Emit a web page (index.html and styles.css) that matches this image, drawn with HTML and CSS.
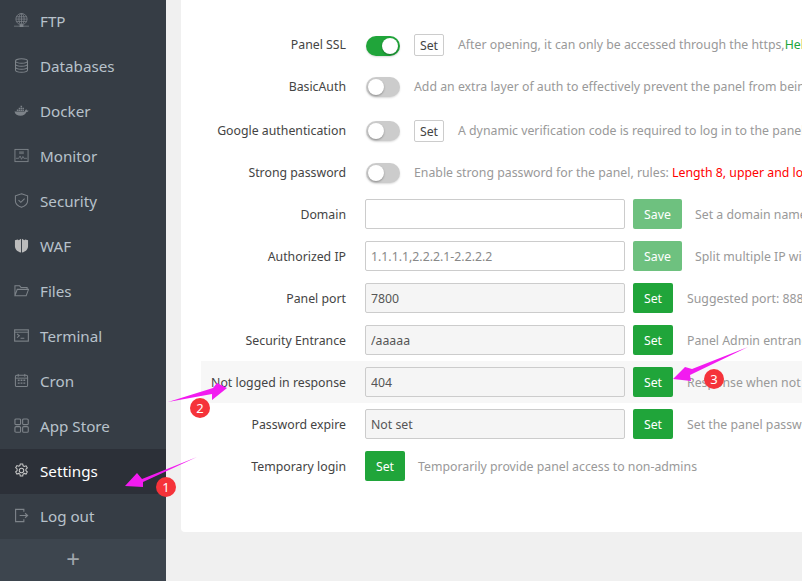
FILE: index.html
```html
<!DOCTYPE html>
<html lang="en">
<head>
<meta charset="utf-8">
<title>Panel settings</title>
<link rel="stylesheet" href="styles.css">
</head>
<body>
<div class="app">
  <aside class="sidebar">
    <nav class="menu">
      <a class="item"><svg class="ico" viewBox="0 0 16 16"><g fill="none" stroke="currentColor" stroke-width=".8"><circle cx="8" cy="6.500" r="6"/><ellipse cx="8" cy="6.500" rx="2.800" ry="6"/><path d="M2.500 4h11M2 6.500h12M2.500 9h11M8 .5v12"/></g><path d="M0 13.500h16v1H0zM6 12.500h4v2.500H6z" fill="currentColor"/></svg><span>FTP</span></a>
      <a class="item"><svg class="ico" viewBox="0 0 16 16"><g fill="none" stroke="currentColor" stroke-width="1.100"><ellipse cx="8" cy="3.200" rx="6.400" ry="2.400"/><path d="M1.600 3.200v9.600c0 1.300 2.900 2.400 6.400 2.400s6.400-1.100 6.400-2.400V3.200M1.600 6.400c0 1.300 2.900 2.400 6.400 2.400s6.400-1.100 6.400-2.400M1.600 9.600c0 1.300 2.900 2.400 6.400 2.400s6.400-1.100 6.400-2.400"/></g></svg><span>Databases</span></a>
      <a class="item"><svg class="ico" viewBox="0 0 16 16"><path fill="currentColor" d="M.5 9h11c.3-1.400 1-2 1.700-2.300.4.500.6 1 .6 1.400.5-.2 1.200-.2 1.700.1-.4 1-1.300 1.400-2.200 1.400-1 2.600-3.300 4-6.300 4-3.300 0-5.800-1.500-6.500-4.600z"/><path fill="currentColor" d="M3 7h1.600v1.500H3zM5 7h1.600v1.500H5zM7 7h1.600v1.500H7zM9 7h1.600v1.500H9zM5 5h1.600v1.500H5zM7 5h1.600v1.500H7zM9 5h1.600v1.500H9zM7 3h1.600v1.500H7z"/></svg><span>Docker</span></a>
      <a class="item"><svg class="ico" viewBox="0 0 16 16"><rect x="1" y="1.500" width="14" height="13" fill="none" stroke="currentColor"/><path d="M2 11h3l1.500-2.500L8 12l1.500-3 1 2H14" fill="none" stroke="currentColor" stroke-width=".8"/><path d="M5.500 3.500h5v3h-5z" fill="currentColor" opacity=".6"/></svg><span>Monitor</span></a>
      <a class="item"><svg class="ico" viewBox="0 0 16 16"><path d="M8 .8 14.500 3v5.500c0 3-2.600 5.300-6.500 6.800-3.900-1.500-6.500-3.800-6.500-6.800V3z" fill="none" stroke="currentColor" stroke-width="1.100"/><path d="M4.800 7.600 7.300 10l4-4" fill="none" stroke="currentColor" stroke-width="1.100"/></svg><span>Security</span></a>
      <a class="item"><svg class="ico ico-solid" viewBox="0 0 16 16"><path fill="currentColor" d="M1 2.500 4 1.500l1 .8L7.500.8V15.500C3.500 14.500 1 12 1 8.500zM8.500.8 11 2.300l1-.8 3 1v6c0 3.500-2.500 6-6.500 7z"/></svg><span>WAF</span></a>
      <a class="item"><svg class="ico" viewBox="0 0 16 16"><path d="M1 13.500V3h5l1.500 1.700H14v2M1 13.500 3.500 6.800H15.500L13 13.500z" fill="none" stroke="currentColor" stroke-width="1.100"/></svg><span>Files</span></a>
      <a class="item"><svg class="ico" viewBox="0 0 16 16"><rect x=".7" y="2" width="14.600" height="12" fill="none" stroke="currentColor" stroke-width="1.200"/><path d="M.7 4.500h14.600" stroke="currentColor"/><path d="m3.200 6.300 2.500 2-2.500 2M7 11h4" fill="none" stroke="currentColor" stroke-width="1.100"/></svg><span>Terminal</span></a>
      <a class="item"><svg class="ico" viewBox="0 0 16 16"><rect x="1.500" y="2.500" width="13" height="12" rx="1.500" fill="none" stroke="currentColor" stroke-width="1.100"/><path d="M4.500 1v3M11.500 1v3M1.500 5.500h13" stroke="currentColor"/><path fill="currentColor" d="M4 7h2v1.500H4zM7 7h2v1.500H7zM10 7h2v1.500h-2zM4 10h2v1.500H4zM7 10h2v1.500H7zM10 10h2v1.500h-2z"/></svg><span>Cron</span></a>
      <a class="item"><svg class="ico" viewBox="0 0 16 16"><g fill="none" stroke="currentColor" stroke-width="1.200"><rect x="1" y="1" width="6" height="6" rx="1.200"/><rect x="9.200" y="1" width="6" height="6" rx="1.200"/><rect x="1" y="9.200" width="6" height="6" rx="1.200"/><rect x="9.200" y="9.200" width="6" height="6" rx="1.200"/></g></svg><span>App Store</span></a>
      <a class="item active"><svg class="ico" viewBox="0 0 16 16"><g fill="none" stroke="currentColor" stroke-width="1.100"><path d="M6.700 1h2.600l.4 2 1.300.7 1.900-.7 1.300 2.300-1.500 1.300v1.600l1.500 1.300-1.300 2.300-1.900-.7-1.300.7-.4 2H6.700l-.4-2-1.300-.7-1.900.7-1.300-2.300 1.500-1.300V6.300L1.800 5l1.300-2.300 1.900.7 1.300-.7z"/><circle cx="8" cy="7.900" r="2.400"/></g></svg><span>Settings</span></a>
      <a class="item"><svg class="ico" viewBox="0 0 16 16"><path d="M10.500 4V1.500H1.700v13h8.800V12" fill="none" stroke="currentColor" stroke-width="1.200"/><path d="M6 8h8M11.800 5.600 14.500 8l-2.700 2.400" fill="none" stroke="currentColor" stroke-width="1.200"/></svg><span>Log out</span></a>
    </nav>
    <div class="add">+</div>
  </aside>
  <main class="main">
    <section class="card">
      <div class="row">
        <label class="label">Panel SSL</label>
        <span class="switch switch-set"></span>
        <button class="btn-mini">Set</button>
        <span class="hint hint-mini">After opening, it can only be accessed through the https,<a class="help">Help</a></span>
      </div>
      <div class="row">
        <label class="label">BasicAuth</label>
        <span class="switch"></span>
        <span class="hint">Add an extra layer of auth to effectively prevent the panel from being scanned</span>
      </div>
      <div class="row row-spaced">
        <label class="label">Google authentication</label>
        <span class="switch"></span>
        <button class="btn-mini">Set</button>
        <span class="hint hint-mini">A dynamic verification code is required to log in to the panel</span>
      </div>
      <div class="row">
        <label class="label">Strong password</label>
        <span class="switch"></span>
        <span class="hint">Enable strong password for the panel, rules: <b class="warn">Length 8, upper and lower case, numbers</b></span>
      </div>
      <div class="row">
        <label class="label">Domain</label>
        <input class="field" value="">
        <button class="btn btn-faded">Save</button>
        <span class="hint">Set a domain name for the panel access</span>
      </div>
      <div class="row">
        <label class="label">Authorized IP</label>
        <input class="field" placeholder="1.1.1.1,2.2.2.1-2.2.2.2">
        <button class="btn btn-faded">Save</button>
        <span class="hint">Split multiple IP with commas, only these IPs can access</span>
      </div>
      <div class="row">
        <label class="label">Panel port</label>
        <input class="field locked" value="7800" readonly>
        <button class="btn">Set</button>
        <span class="hint">Suggested port: 8888 - 65535, remember to open it</span>
      </div>
      <div class="row">
        <label class="label">Security Entrance</label>
        <input class="field locked" value="/aaaaa" readonly>
        <button class="btn">Set</button>
        <span class="hint">Panel Admin entrance, only accessible with this path</span>
      </div>
      <div class="row row-hover">
        <label class="label">Not logged in response</label>
        <input class="field locked" value="404" readonly>
        <button class="btn">Set</button>
        <span class="hint">Response when not logged in to the panel entrance</span>
      </div>
      <div class="row">
        <label class="label">Password expire</label>
        <input class="field locked" value="Not set" readonly>
        <button class="btn">Set</button>
        <span class="hint">Set the panel password expiration time for the account</span>
      </div>
      <div class="row">
        <label class="label">Temporary login</label>
        <button class="btn btn-first">Set</button>
        <span class="hint">Temporarily provide panel access to non-admins</span>
      </div>
    </section>
  </main>
</div>
<svg class="marks" viewBox="0 0 802 581">
  <polygon points="197,457 142,479 137,473 125,486 143,487 143,482"/>
  <polygon points="168,402 213,388 217,383 227,388 212,400 212,394"/>
  <polygon points="748,347 692,369 685,367 673,379 691,381 690,375"/>
</svg>
<span class="badge badge-1">1</span>
<span class="badge badge-2">2</span>
<span class="badge badge-3">3</span>
</body>
</html>
```
FILE: styles.css
```css
* { box-sizing: border-box; }
html, body { margin: 0; height: 100%; overflow: hidden; }
body { font-family: "Noto Sans", "Liberation Sans", sans-serif; font-size: 12.3px; color: #333; background: #f0f0f0; }
.app { display: flex; height: 581px; width: 802px; overflow: hidden; }
.sidebar { width: 166px; flex: none; display: flex; flex-direction: column; background: #363d45; overflow: hidden; }
.menu { flex: 1; margin-top: -1px; }
.item { display: flex; align-items: center; height: 45px; padding-left: 14px; color: #b8c2cb; font-size: 15.2px; }
.item span { margin-left: 11px; margin-bottom: 2px; }
.item.active { background: #2c3038; color: #fff; }
.ico { width: 15px; height: 15px; flex: none; margin-bottom: 2px; color: #7d8389; }
.ico-solid { color: #bcbcbc; }
.active .ico { color: #c8c8c8; }
.add { height: 43px; flex: none; padding-right: 20px; background: #3d454e; color: #a0a6ac; font-size: 24px; line-height: 40px; text-align: center; }
.main { flex: 1; min-width: 0; padding-left: 15px; overflow: hidden; }
.card { width: 800px; padding: 23px 0 45px 20px; background: #fff; border-radius: 0 0 4px 4px; }
.row { display: flex; align-items: center; height: 42px; white-space: nowrap; }
.row-spaced { margin-top: 2px; }
.row-hover { background: #f7f7f7; }
.label { width: 145px; flex: none; margin-right: 19px; text-align: right; color: #444; }
.switch { position: relative; flex: none; width: 34px; height: 20px; margin: 2px 14px 0 1px; border-radius: 10px; background: #ccc; box-shadow: 0 1px 2px rgba(0,0,0,.15); }
.switch::after { content: ""; position: absolute; left: 2px; top: 2px; width: 16px; height: 16px; border-radius: 50%; background: #fff; box-shadow: 0 1px 2px rgba(0,0,0,.3); }
.switch-set { margin-top: 4px; background: #20a53a; }
.switch-set::after { left: 16px; }
.btn-mini { flex: none; width: 30px; height: 22px; padding: 0; margin: 2px 14px 0 0; border: 1px solid #ccc; border-radius: 2px; background: #fff; color: #444; font: inherit; }
.hint { color: #999; }
.help { color: #20a53a; }
.warn { font-weight: normal; color: #f00; }
.field { flex: none; width: 260px; height: 30px; padding: 0 5px; margin-right: 8px; border: 1px solid #ccc; border-radius: 2px; background: #fff; color: #555; font: inherit; }
.field::placeholder { color: #888; opacity: 1; }
.field.locked { background: #f5f5f5; }
.btn { flex: none; height: 30px; min-width: 40px; padding: 0 10px; margin-right: 14px; border: 0; border-radius: 2px; background: #20a53a; color: #fff; font: inherit; }
.btn-faded { width: 49px; margin-right: 13px; background: #6ec17f; }
.btn-first { margin-right: 13px; }
.marks { position: absolute; left: 0; top: 0; width: 802px; height: 581px; pointer-events: none; }
.marks polygon { fill: #f21bf0; }
.badge { position: absolute; width: 20px; height: 20px; border-radius: 50%; background: #f5333a; color: #fff; font-size: 13px; line-height: 20px; text-align: center; }
.badge-1 { left: 156px; top: 477px; }
.badge-2 { left: 190px; top: 398px; }
.badge-3 { left: 704px; top: 369px; }
```
